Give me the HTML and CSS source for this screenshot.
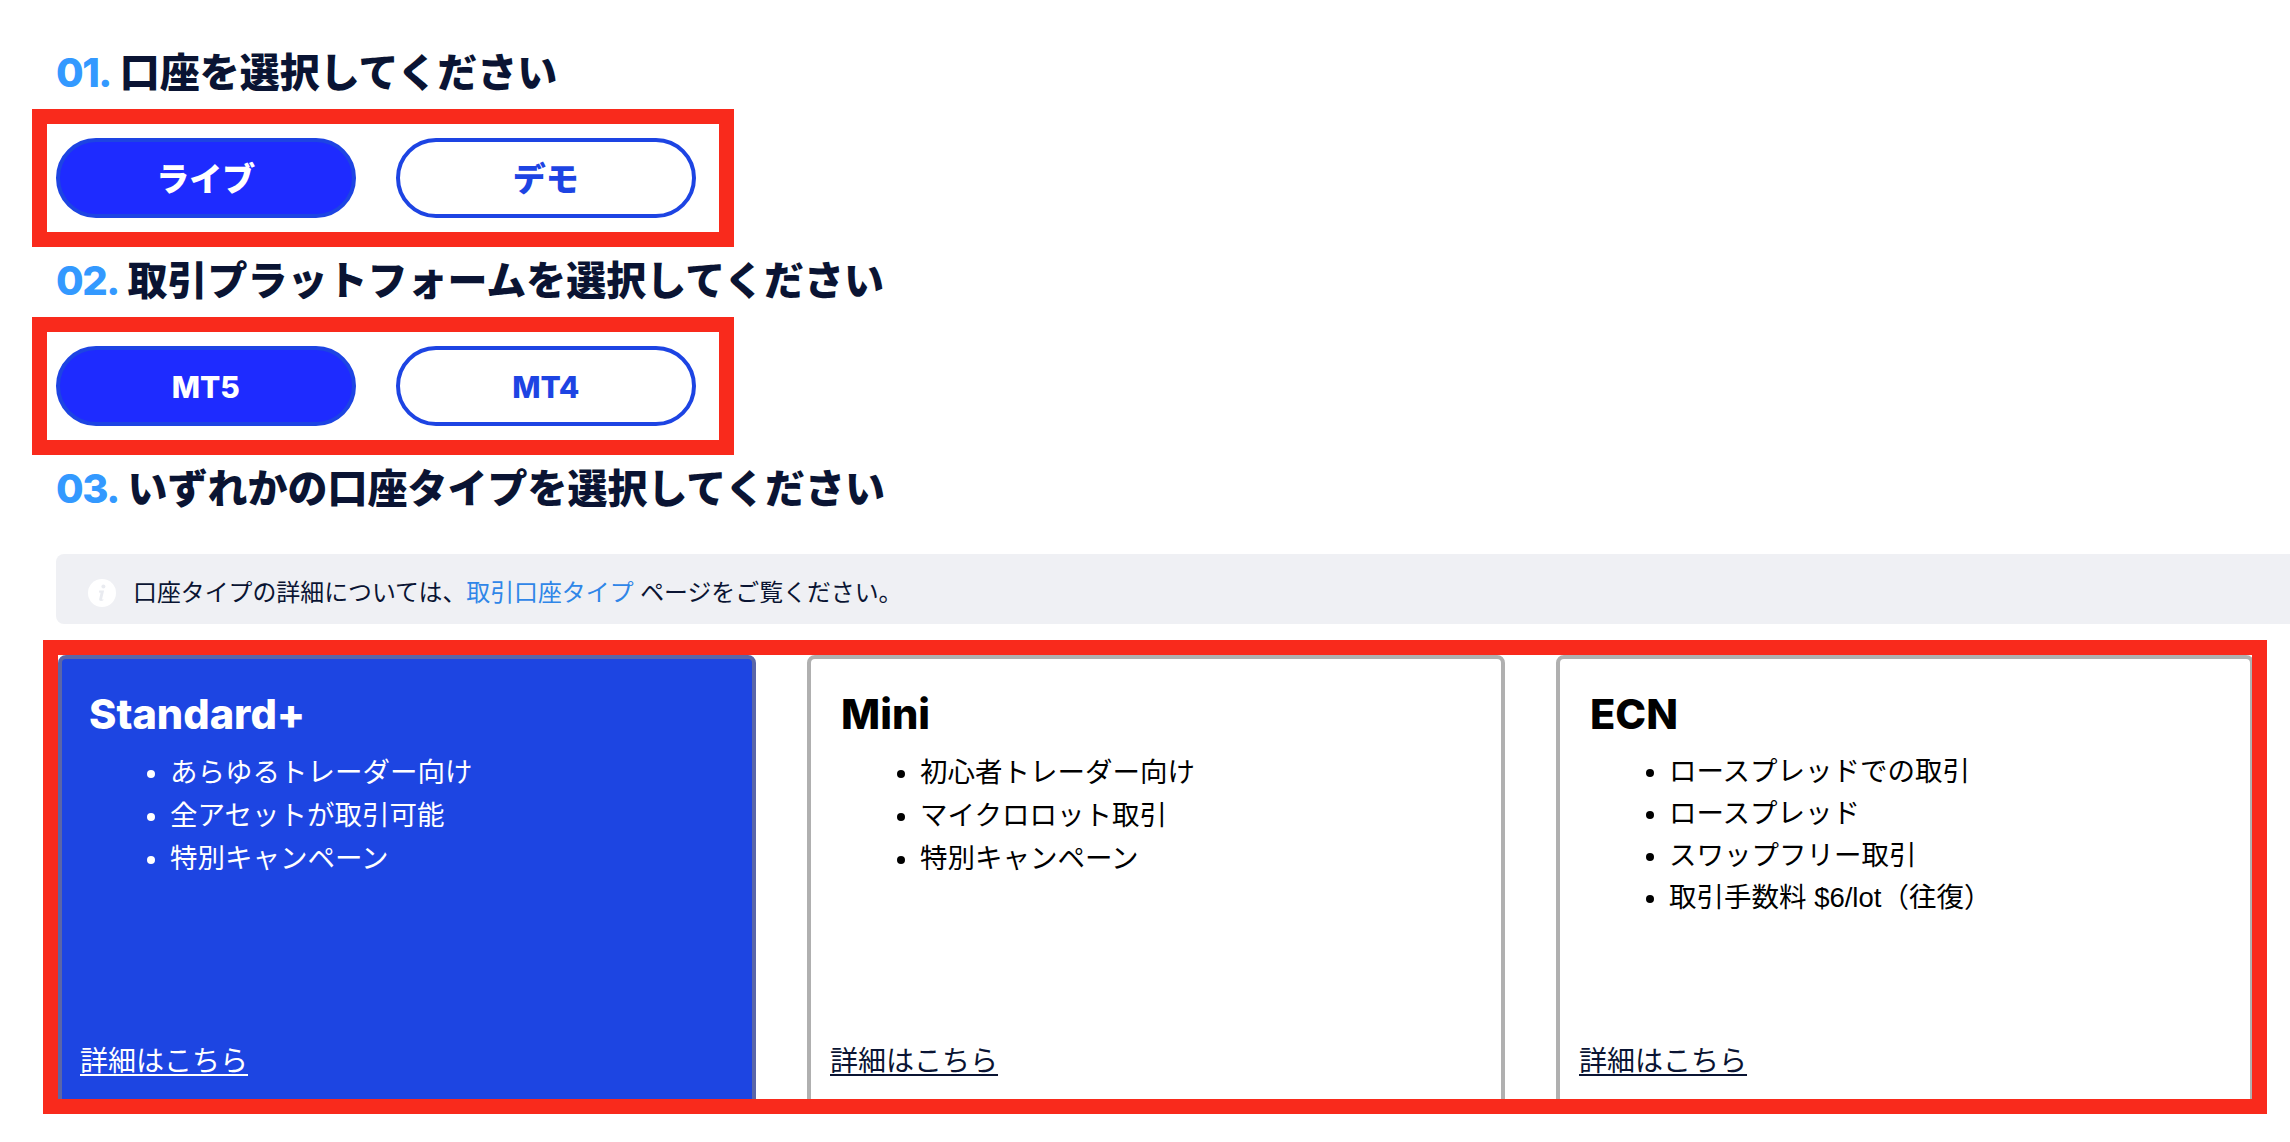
FILE: index.html
```html
<!DOCTYPE html>
<html lang="ja">
<head>
<meta charset="utf-8">
<title>口座を選択してください</title>
<link rel="stylesheet" href="styles.css">
</head>
<body>
<main class="page">
  <h2 class="step"><span class="num">01.</span> 口座を選択してください</h2>
  <div class="mark-box">
    <button class="pill is-on">ライブ</button>
    <button class="pill">デモ</button>
  </div>
  <h2 class="step"><span class="num">02.</span> 取引プラットフォームを選択してください</h2>
  <div class="mark-box">
    <button class="pill is-on latin">MT5</button>
    <button class="pill latin">MT4</button>
  </div>
  <h2 class="step"><span class="num">03.</span> いずれかの口座タイプを選択してください</h2>
  <div class="notice">
    <svg class="info" viewBox="0 0 28 28" aria-hidden="true">
      <circle cx="14" cy="14" r="14" fill="#fff"/>
      <circle cx="15.400" cy="7.600" r="2" fill="#e9ebf0"/>
      <path d="M11.200 11.600h4.900l-2 8.300c-.1.500.3.700 1.400.4l-.3 1.300c-2.500.8-4.400.4-4-1.500l1.400-6.300-1.600-.3z" fill="#e9ebf0"/>
    </svg>
    <p class="notice-text">口座タイプの詳細については、<a href="#" class="notice-link">取引口座タイプ</a> ページをご覧ください。</p>
  </div>
  <div class="card-frame">
    <article class="card is-on">
      <h3 class="card-title">Standard+</h3>
      <ul class="card-list">
        <li>あらゆるトレーダー向け</li>
        <li>全アセットが取引可能</li>
        <li>特別キャンペーン</li>
      </ul>
      <a href="#" class="card-link">詳細はこちら</a>
    </article>
    <article class="card">
      <h3 class="card-title">Mini</h3>
      <ul class="card-list">
        <li>初心者トレーダー向け</li>
        <li>マイクロロット取引</li>
        <li>特別キャンペーン</li>
      </ul>
      <a href="#" class="card-link">詳細はこちら</a>
    </article>
    <article class="card">
      <h3 class="card-title">ECN</h3>
      <ul class="card-list is-tight">
        <li>ロースプレッドでの取引</li>
        <li>ロースプレッド</li>
        <li>スワップフリー取引</li>
        <li>取引手数料 $6/lot（往復）</li>
      </ul>
      <a href="#" class="card-link">詳細はこちら</a>
    </article>
  </div>
</main>
</body>
</html>
```
FILE: styles.css
```css
* { box-sizing: border-box; }
html, body { margin: 0; padding: 0; background: #fff; overflow: hidden; }
body {
  width: 2290px;
  height: 1142px;
  color: #0a1433;
  font-family: "Liberation Sans", "Noto Sans CJK JP", sans-serif;
}
.page { padding-top: 43px; }
.step {
  margin: 0 0 8px 56px;
  height: 58px;
  font-family: Inter, "Noto Sans CJK JP", sans-serif;
  font-size: 40px;
  line-height: 60px;
  font-weight: 800;
  white-space: nowrap;
  color: #0a1433;
}
.num { color: #3399ff; letter-spacing: -1.5px; }
.mark-box {
  display: flex;
  gap: 40.5px;
  width: 701.5px;
  height: 138px;
  margin: 0 0 4px 32px;
  padding: 14px 0 0 9px;
  border: 15px solid #f92a1c;
}
.pill {
  width: 299.5px;
  height: 80px;
  border: 4px solid #1d44e3;
  border-radius: 40px;
  background: #fff;
  color: #1d44e3;
  font-family: Inter, "Noto Sans CJK JP", sans-serif;
  font-size: 33px;
  font-weight: 800;
  padding: 0 0 3px;
}
.pill.latin { font-size: 30px; padding: 2px 0 0; }
.pill.is-on { background: #1e2bff; color: #fff; }
.notice {
  display: flex;
  align-items: center;
  margin: 37px 0 16px 56px;
  width: 2300px;
  height: 70px;
  padding: 7px 0 0 32px;
  background: #eff0f4;
  border-radius: 8px 0 0 8px;
}
.info { width: 28px; height: 28px; flex: none; }
.notice-text {
  margin: 0 0 0 17px;
  font-size: 23.9px;
  line-height: 34px;
  color: #0a1433;
}
.notice-link { color: #2f86e8; text-decoration: none; }
.card-frame {
  display: flex;
  gap: 51px;
  width: 2224px;
  height: 474px;
  margin-left: 43px;
  border: 15px solid #f92a1c;
  overflow: hidden;
}
.card {
  flex: none;
  display: flex;
  flex-direction: column;
  width: 698px;
  height: 470px;
  padding: 32px 0 0 19px;
  background: #fff;
  border: 4px solid #b0b0b0;
  border-radius: 8px;
  color: #000;
}
.card.is-on {
  padding-left: 18px;
  background: #1d45e2;
  border-color: #5a66a8;
  color: #fff;
}
.card-title {
  margin: 0 0 0 11px;
  font-family: Inter, "Noto Sans CJK JP", sans-serif;
  font-size: 41.5px;
  line-height: 46px;
  font-weight: 800;
}
.card.is-on .card-title { margin-left: 9px; }
.card-list {
  margin: 14px 0 0 0;
  padding: 0 0 0 90px;
  font-size: 27.5px;
  line-height: 43px;
}
.card-list.is-tight { line-height: 42px; }
.card-link {
  margin-top: auto;
  margin-bottom: 39px;
  align-self: flex-start;
  font-size: 28px;
  line-height: 40px;
  color: #0a1433;
  text-decoration: underline;
  text-underline-offset: 3px;
}
.card.is-on .card-link { color: #fff; }
```
